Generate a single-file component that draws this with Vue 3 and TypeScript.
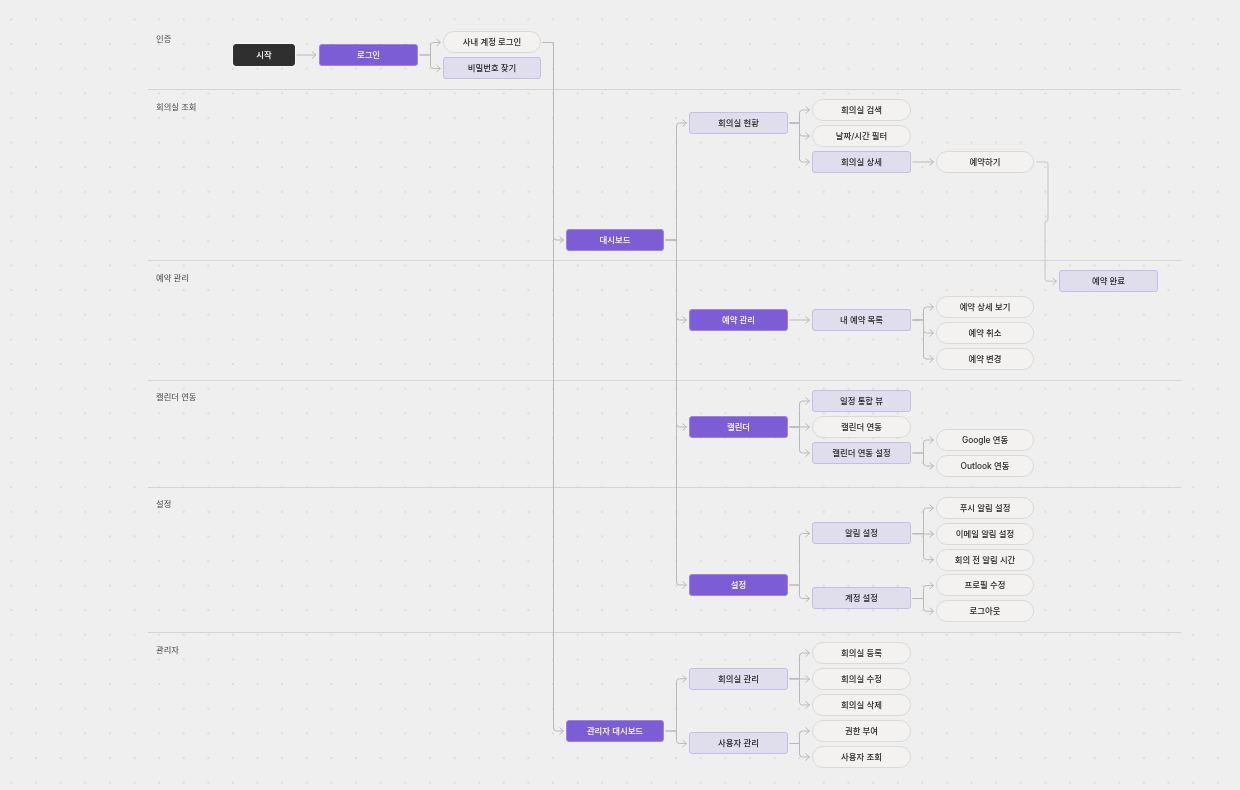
<script setup lang="ts">
type Kind = 'dark' | 'primary' | 'soft' | 'pill'
interface FlowNode { id: string; label: string; col: number; cy: number; kind: Kind }

const H = 22.4
const columns = [319, 443, 566, 689, 812, 936, 1059]
const widths = [99, 98, 98, 99, 99, 98, 99]

const nodes: FlowNode[] = [
  { id: 'login', label: '로그인', col: 0, cy: 55, kind: 'primary' },
  { id: 'sso', label: '사내 계정 로그인', col: 1, cy: 42.5, kind: 'pill' },
  { id: 'pw', label: '비밀번호 찾기', col: 1, cy: 68.5, kind: 'soft' },
  { id: 'dash', label: '대시보드', col: 2, cy: 240, kind: 'primary' },
  { id: 'admin', label: '관리자 대시보드', col: 2, cy: 731, kind: 'primary' },
  { id: 'rooms', label: '회의실 현황', col: 3, cy: 123, kind: 'soft' },
  { id: 'res', label: '예약 관리', col: 3, cy: 320, kind: 'primary' },
  { id: 'cal', label: '캘린더', col: 3, cy: 427, kind: 'primary' },
  { id: 'set', label: '설정', col: 3, cy: 585, kind: 'primary' },
  { id: 'rm', label: '회의실 관리', col: 3, cy: 678.7, kind: 'soft' },
  { id: 'um', label: '사용자 관리', col: 3, cy: 743.5, kind: 'soft' },
  { id: 'search', label: '회의실 검색', col: 4, cy: 110, kind: 'pill' },
  { id: 'filter', label: '날짜/시간 필터', col: 4, cy: 136, kind: 'pill' },
  { id: 'detail', label: '회의실 상세', col: 4, cy: 162, kind: 'soft' },
  { id: 'mine', label: '내 예약 목록', col: 4, cy: 320, kind: 'soft' },
  { id: 'unified', label: '일정 통합 뷰', col: 4, cy: 401, kind: 'soft' },
  { id: 'link', label: '캘린더 연동', col: 4, cy: 427, kind: 'pill' },
  { id: 'linkset', label: '캘린더 연동 설정', col: 4, cy: 453, kind: 'soft' },
  { id: 'noti', label: '알림 설정', col: 4, cy: 533.5, kind: 'soft' },
  { id: 'acct', label: '계정 설정', col: 4, cy: 598.5, kind: 'soft' },
  { id: 'rmadd', label: '회의실 등록', col: 4, cy: 653, kind: 'pill' },
  { id: 'rmedit', label: '회의실 수정', col: 4, cy: 679, kind: 'pill' },
  { id: 'rmdel', label: '회의실 삭제', col: 4, cy: 705, kind: 'pill' },
  { id: 'grant', label: '권한 부여', col: 4, cy: 731, kind: 'pill' },
  { id: 'users', label: '사용자 조회', col: 4, cy: 757, kind: 'pill' },
  { id: 'book', label: '예약하기', col: 5, cy: 162, kind: 'pill' },
  { id: 'view', label: '예약 상세 보기', col: 5, cy: 307, kind: 'pill' },
  { id: 'cancel', label: '예약 취소', col: 5, cy: 333, kind: 'pill' },
  { id: 'change', label: '예약 변경', col: 5, cy: 359, kind: 'pill' },
  { id: 'google', label: 'Google 연동', col: 5, cy: 440, kind: 'pill' },
  { id: 'outlook', label: 'Outlook 연동', col: 5, cy: 466, kind: 'pill' },
  { id: 'push', label: '푸시 알림 설정', col: 5, cy: 508, kind: 'pill' },
  { id: 'email', label: '이메일 알림 설정', col: 5, cy: 534, kind: 'pill' },
  { id: 'before', label: '회의 전 알림 시간', col: 5, cy: 559.7, kind: 'pill' },
  { id: 'profile', label: '프로필 수정', col: 5, cy: 585.5, kind: 'pill' },
  { id: 'logout', label: '로그아웃', col: 5, cy: 611.3, kind: 'pill' },
  { id: 'done', label: '예약 완료', col: 6, cy: 281.3, kind: 'soft' },
]

const links: [string, string[]][] = [
  ['login', ['sso', 'pw']],
  ['sso', ['dash', 'admin']],
  ['dash', ['rooms', 'res', 'cal', 'set']],
  ['admin', ['rm', 'um']],
  ['rooms', ['search', 'filter', 'detail']],
  ['detail', ['book']],
  ['res', ['mine']],
  ['mine', ['view', 'cancel', 'change']],
  ['cal', ['unified', 'link', 'linkset']],
  ['linkset', ['google', 'outlook']],
  ['set', ['noti', 'acct']],
  ['noti', ['push', 'email', 'before']],
  ['acct', ['profile', 'logout']],
  ['rm', ['rmadd', 'rmedit', 'rmdel']],
  ['um', ['grant', 'users']],
]

const lanes = [
  { label: '인증', y: 34.5, line: 89.5 },
  { label: '회의실 조회', y: 102.5, line: 260.5 },
  { label: '예약 관리', y: 273.5, line: 380.5 },
  { label: '캘린더 연동', y: 392.5, line: 487.5 },
  { label: '설정', y: 499.5, line: 632.5 },
  { label: '관리자', y: 645.5 },
]

const byId = new Map(nodes.map((n) => [n.id, n]))

function arrow(x: number, y: number): string {
  return `M${x - 4} ${y - 3.5}L${x} ${y}L${x - 4} ${y + 3.5}`
}

function elbow(x1: number, y1: number, xm: number, y2: number, x2: number): string {
  if (Math.abs(y1 - y2) < 1) return `M${x1} ${y2}H${x2}`
  const s = y2 > y1 ? 1 : -1
  return `M${x1} ${y1}H${xm}V${y2 - 3 * s}Q${xm} ${y2} ${xm + 3} ${y2}H${x2}`
}

const edgePaths: string[] = [`M296.5 55H316`, arrow(316, 55)]
for (const [from, targets] of links) {
  const a = byId.get(from)!
  for (const to of targets) {
    const b = byId.get(to)!
    const left = columns[b.col]
    edgePaths.push(
      elbow(columns[a.col] + widths[a.col] + 1.5, a.cy, left - 12.5, b.cy, left - 2.5),
      arrow(left - 2.5, b.cy),
    )
  }
}

const softPath = `M1036.5 162H1045Q1048 162 1048 165V218Q1048 221 1046.5 221Q1045 221 1045 224V278Q1045 281.3 1048 281.3H1056.5`
const softArrow = arrow(1056.5, 281.3)

const dark = { label: '시작', x: 233, cy: 55 }
</script>

<template>
  <main class="canvas">
    <svg class="layer" width="1240" height="790" viewBox="0 0 1240 790" aria-hidden="true">
      <defs>
        <pattern id="dots" x="11.4" y="19.3" width="24.62" height="24.62" patternUnits="userSpaceOnUse">
          <circle cx="0" cy="0" r="0.6" fill="#9c9c9c" />
          <circle cx="24.62" cy="0" r="0.6" fill="#9c9c9c" />
          <circle cx="0" cy="24.62" r="0.6" fill="#9c9c9c" />
          <circle cx="24.62" cy="24.62" r="0.6" fill="#9c9c9c" />
        </pattern>
      </defs>
      <rect width="1240" height="790" fill="url(#dots)" />
      <template v-for="lane in lanes" :key="lane.label">
        <line v-if="lane.line" x1="148" x2="1181" :y1="lane.line" :y2="lane.line" class="sep" />
      </template>
      <path v-for="(d, i) in edgePaths" :key="i" :d="d" class="edge" />
      <path :d="softPath" class="edge-soft" />
      <path :d="softArrow" class="edge" />
    </svg>

    <span
      v-for="lane in lanes"
      :key="lane.label"
      class="lane"
      :style="{ top: lane.y + 'px' }"
    >{{ lane.label }}</span>

    <div class="node dark" :style="{ left: dark.x + 'px', top: dark.cy - H / 2 + 'px' }">{{ dark.label }}</div>
    <div
      v-for="n in nodes"
      :key="n.id"
      class="node"
      :class="n.kind"
      :style="{ left: columns[n.col] + 'px', top: n.cy - H / 2 + 'px', width: widths[n.col] + 'px' }"
    >{{ n.label }}</div>
  </main>
</template>

<style scoped>
.canvas {
  position: relative;
  width: 1240px;
  height: 790px;
  overflow: hidden;
  background: #efefef;
  font-family: Inter, "Noto Sans CJK KR", sans-serif;
  color: #262626;
}
.layer {
  position: absolute;
  inset: 0;
}
.sep {
  stroke: #d4d4d4;
  stroke-width: 1;
}
.edge {
  fill: none;
  stroke: #b9b9b9;
  stroke-width: 1;
}
.edge-soft {
  fill: none;
  stroke: #d3d3d3;
  stroke-width: 1.5;
}
.lane {
  position: absolute;
  left: 156px;
  font-size: 8.3px;
  line-height: 1;
  color: #444;
  will-change: transform;
  filter: blur(0.15px);
}
.node {
  position: absolute;
  box-sizing: border-box;
  height: 22.4px;
  padding-bottom: 1.5px;
  display: flex;
  align-items: center;
  justify-content: center;
  font-size: 8.4px;
  font-weight: 500;
  border-radius: 3px;
  border: 1px solid transparent;
  white-space: nowrap;
  will-change: transform;
  filter: blur(0.15px);
}
.dark {
  width: 62px;
  background: #2f2f2f;
  border-color: #2f2f2f;
  box-shadow: 0 0 0 1px #f6f6f6;
  color: #fff;
}
.primary {
  background: #7c5dd5;
  border-color: #9a84e2;
  color: #fff;
}
.soft {
  background: rgba(223, 219, 236, 0.93);
  border-color: #c6bbe9;
}
.pill {
  background: rgba(243, 242, 240, 0.92);
  border-color: #d9d9d9;
  border-radius: 11.2px;
}
</style>
